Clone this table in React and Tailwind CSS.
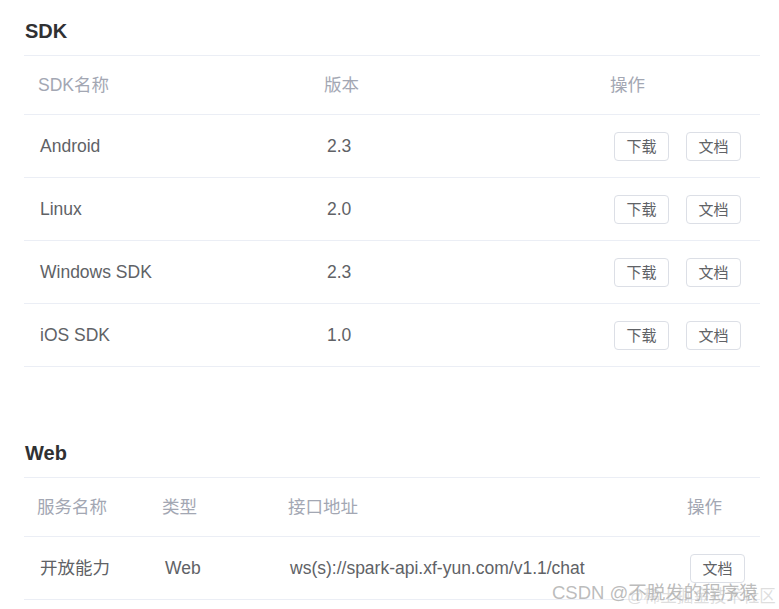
import React from "react";

const FONT = { fontFamily: '"Liberation Sans", Arial, "Noto Sans CJK SC", sans-serif' };

const sdkRows = [
  { name: "Android", version: "2.3" },
  { name: "Linux", version: "2.0" },
  { name: "Windows SDK", version: "2.3" },
  { name: "iOS SDK", version: "1.0" },
];

function Btn({ children }) {
  return (
    <button className="h-[29px] w-[55px] rounded-[4px] border border-[#dcdfe6] bg-white text-[15px] text-[#606266] leading-none">
      {children}
    </button>
  );
}

function Title({ children }) {
  return (
    <h2 className="h-[55px] pl-[1px] pt-[19px] text-[20px] font-bold leading-[24px] text-[#303133]">
      {children}
    </h2>
  );
}

export default function App() {
  return (
    <div className="relative min-h-[609px] w-[779px] bg-white pl-[24px] pr-[19px]" style={FONT}>
      {/* ── SDK ───────────────────────────── */}
      <Title>SDK</Title>
      <div className="border-t border-[#ebeef5] text-[17.5px]">
        <div className="grid h-[59px] grid-cols-[286px_286px_1fr] items-center border-b border-[#ebeef5] text-[#a3a7b3]">
          <div className="pl-[14px]">SDK名称</div>
          <div className="pl-[14px]">版本</div>
          <div className="pl-[14px]">操作</div>
        </div>
        {sdkRows.map((r) => (
          <div
            key={r.name}
            className="grid h-[63px] grid-cols-[286px_286px_1fr] items-center border-b border-[#ebeef5] text-[#606266]"
          >
            <div className="pl-[16px]">{r.name}</div>
            <div className="pl-[17px]">{r.version}</div>
            <div className="flex gap-[17px] pl-[18px]">
              <Btn>下载</Btn>
              <Btn>文档</Btn>
            </div>
          </div>
        ))}
      </div>

      {/* ── Web ───────────────────────────── */}
      <div className="mt-[55px]">
        <Title>Web</Title>
        <div className="border-t border-[#ebeef5] text-[17.5px]">
          <div className="grid h-[59px] grid-cols-[124px_126px_399px_1fr] items-center border-b border-[#ebeef5] text-[#a3a7b3]">
            <div className="pl-[13px]">服务名称</div>
            <div className="pl-[14px]">类型</div>
            <div className="pl-[14px]">接口地址</div>
            <div className="pl-[14px]">操作</div>
          </div>
          <div className="grid h-[63px] grid-cols-[124px_126px_399px_1fr] items-center border-b border-[#ebeef5] text-[#606266]">
            <div className="pl-[16px]">开放能力</div>
            <div className="pl-[17px]">Web</div>
            <div className="pl-[16px]">ws(s)://spark-api.xf-yun.com/v1.1/chat</div>
            <div className="pl-[17px]">
              <Btn>文档</Btn>
            </div>
          </div>
        </div>
      </div>

      {/* watermark */}
      <span className="absolute left-[627px] top-[584px] whitespace-nowrap text-[16.5px] text-[#c8c8c8]/60">
        @稀土掘金技术社区
      </span>
      <span className="absolute left-[552px] top-[579px] whitespace-nowrap text-[18.5px] text-[#b0b0b0]/85">
        CSDN @不脱发的程序猿
      </span>
    </div>
  );
}
